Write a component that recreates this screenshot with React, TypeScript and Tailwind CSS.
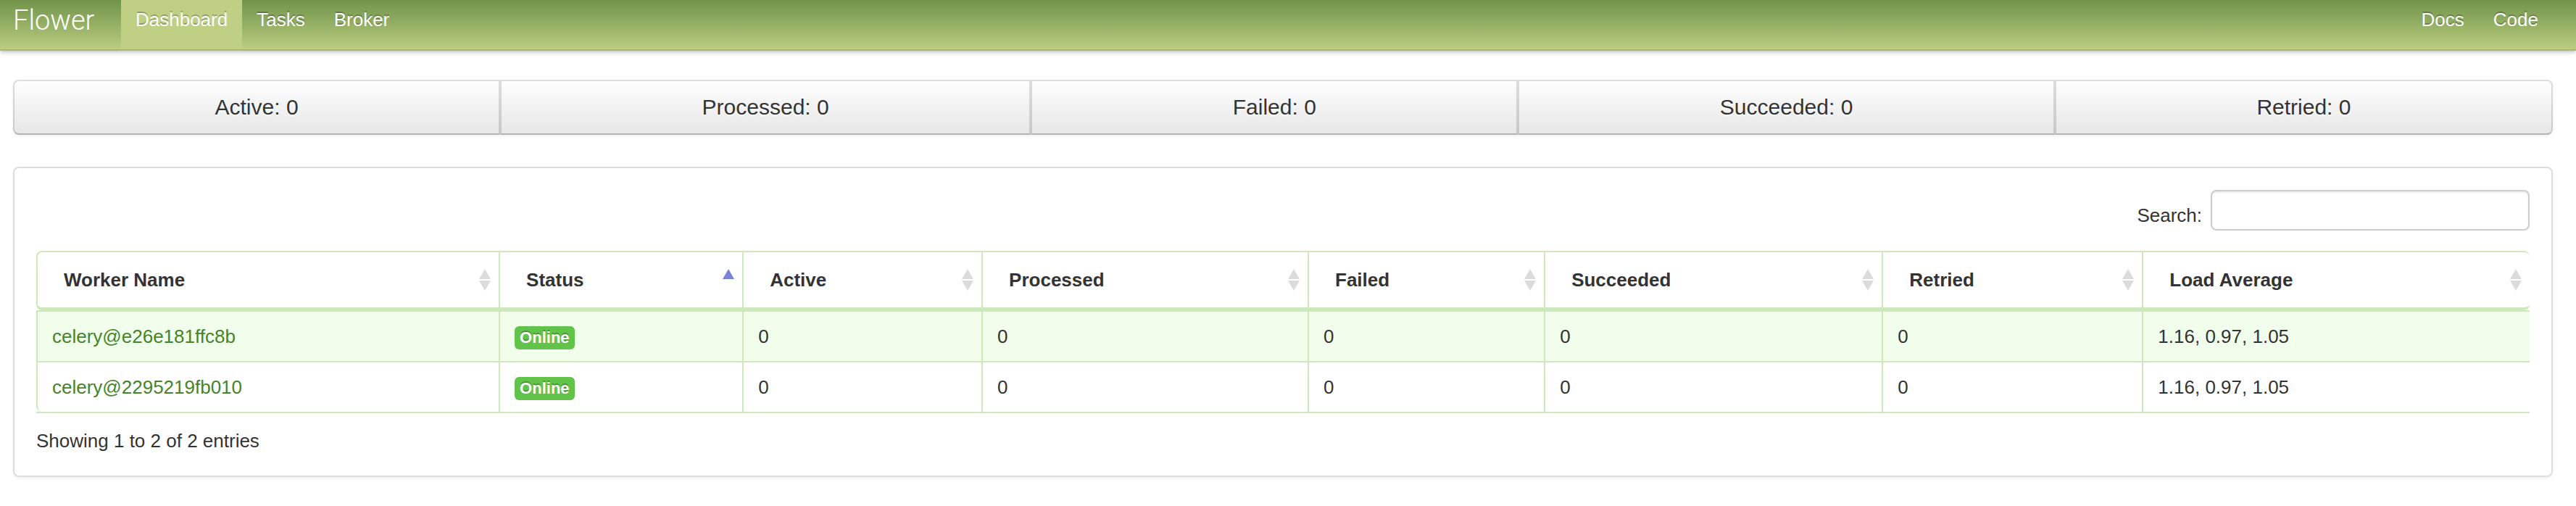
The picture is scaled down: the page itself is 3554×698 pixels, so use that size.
import React from "react";

const navLinks = ["Dashboard", "Tasks", "Broker"];
const helpLinks = ["Docs", "Code"];

const stats = [
  { label: "Active", value: 0 },
  { label: "Processed", value: 0 },
  { label: "Failed", value: 0 },
  { label: "Succeeded", value: 0 },
  { label: "Retried", value: 0 },
];

type Sort = "none" | "ascending";

const columns: { title: string; width: string; sort: Sort }[] = [
  { title: "Worker Name", width: "w-[18.55%]", sort: "none" },
  { title: "Status", width: "w-[9.77%]", sort: "ascending" },
  { title: "Active", width: "w-[9.59%]", sort: "none" },
  { title: "Processed", width: "w-[13.08%]", sort: "none" },
  { title: "Failed", width: "w-[9.48%]", sort: "none" },
  { title: "Succeeded", width: "w-[13.55%]", sort: "none" },
  { title: "Retried", width: "w-[10.44%]", sort: "none" },
  { title: "Load Average", width: "w-[15.54%]", sort: "none" },
];

const workers = [
  { name: "celery@e26e181ffc8b", status: "Online", counts: [0, 0, 0, 0, 0], load: "1.16, 0.97, 1.05" },
  { name: "celery@2295219fb010", status: "Online", counts: [0, 0, 0, 0, 0], load: "1.16, 0.97, 1.05" },
];

function SortIcon({ sort }: { sort: Sort }) {
  return (
    <svg width="16" height="30" viewBox="0 0 16 30" className="shrink-0" aria-hidden="true">
      <path d="M8 0 L16 14 H0 Z" fill={sort === "ascending" ? "#7b83d8" : "#dcdcdc"} />
      {sort === "none" && <path d="M0 16 H16 L8 30 Z" fill="#dcdcdc" />}
    </svg>
  );
}

function NavLink({ label, active = false }: { label: string; active?: boolean }) {
  return (
    <li>
      <a
        href="#"
        className={`block h-full px-5 pt-[9px] leading-9 text-white [text-shadow:0_-2px_0_rgba(0,0,0,0.25)] ${
          active ? "bg-[#bfd084]" : ""
        }`}
      >
        {label}
      </a>
    </li>
  );
}

function Navbar() {
  return (
    <nav className="flex h-[70px] items-stretch border-b-2 border-[#a9b973] bg-linear-to-b from-[#71944a] to-[#bbcd80] pr-8 pl-[18px] shadow-[0_2px_6px_rgba(0,0,0,0.25)]">
      <a
        href="#"
        className="w-[149px] pt-2 font-[Roboto,'Liberation_Sans',sans-serif] text-[38px] leading-10 font-light text-white"
      >
        Flower
      </a>
      <ul className="flex">
        {navLinks.map((label) => (
          <NavLink key={label} label={label} active={label === "Dashboard"} />
        ))}
      </ul>
      <ul className="ml-auto flex">
        {helpLinks.map((label) => (
          <NavLink key={label} label={label} />
        ))}
      </ul>
    </nav>
  );
}

function StatBar() {
  return (
    <div className="flex rounded-lg shadow-[0_2px_4px_rgba(0,0,0,0.05)]">
      {stats.map((stat) => (
        <button
          key={stat.label}
          type="button"
          className="flex-auto border-2 border-black/13 border-b-black/22 bg-linear-to-b from-white to-[#e6e6e6] bg-origin-border py-4 text-[30px] leading-10 [text-shadow:0_2px_2px_rgba(255,255,255,0.75)] first:rounded-l-lg last:rounded-r-lg"
        >
          {stat.label}: {stat.value}
        </button>
      ))}
    </div>
  );
}

function WorkerTable() {
  return (
    <table className="mt-7 w-full table-fixed border-separate border-spacing-0 border-b-2 border-[#cde9bc]">
      <thead>
        <tr>
          {columns.map((column) => (
            <th
              key={column.title}
              aria-sort={column.sort}
              className={`border-t-2 border-b-4 border-l-2 border-[#cde9bc] p-0 first:rounded-l-lg last:rounded-r-lg ${column.width}`}
            >
              <button
                type="button"
                className="flex w-full items-center justify-between py-5 pr-[11px] pl-9 text-left leading-9 font-bold"
              >
                {column.title}
                <SortIcon sort={column.sort} />
              </button>
            </th>
          ))}
        </tr>
      </thead>
      <tbody className="[&_td]:border-t-2 [&_td]:border-l-2 [&_td]:border-[#cde9bc] [&_td]:px-5 [&_td]:py-4 [&_tr:last-child_td:first-child]:rounded-bl-lg">
        {workers.map((worker) => (
          <tr key={worker.name} className="odd:bg-[#f2feec]">
            <td>
              <a href="#" className="text-[#468428]">
                {worker.name}
              </a>
            </td>
            <td>
              <span className="mt-1 block w-fit rounded-md bg-[#62c34b] px-[7px] py-[2px] text-[22px] leading-7 font-bold text-white [text-shadow:0_-2px_0_rgba(0,0,0,0.25)]">
                {worker.status}
              </span>
            </td>
            {worker.counts.map((count, index) => (
              <td key={index}>{count}</td>
            ))}
            <td>{worker.load}</td>
          </tr>
        ))}
      </tbody>
    </table>
  );
}

export default function App() {
  return (
    <div className="min-h-screen bg-white font-['Liberation_Sans',Arial,sans-serif] text-[26px] leading-9 text-[#333]">
      <Navbar />
      <main className="flex flex-col gap-11 pt-10 pr-8 pb-10 pl-[18px]">
        <StatBar />
        <section className="rounded-lg border-2 border-[#ddd] p-[30px] shadow-[0_2px_4px_rgba(0,0,0,0.06)]">
          <div className="flex items-end justify-end gap-3">
            <label htmlFor="worker-search" className="pb-[3px]">
              Search:
            </label>
            <input
              id="worker-search"
              type="search"
              className="h-14 w-[440px] rounded-lg border-2 border-[#ccc] bg-white px-3 shadow-[inset_0_2px_2px_rgba(0,0,0,0.075)] outline-none"
            />
          </div>
          <WorkerTable />
          <p className="mt-5">Showing 1 to 2 of 2 entries</p>
        </section>
      </main>
    </div>
  );
}
